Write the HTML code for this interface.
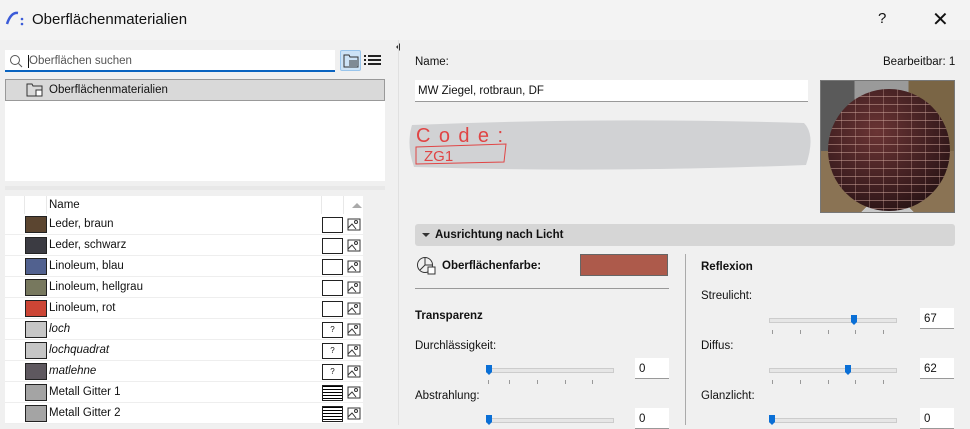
<!DOCTYPE html>
<html><head><meta charset="utf-8"><style>
*{margin:0;padding:0;box-sizing:border-box}
body{width:970px;height:425px;overflow:hidden;background:#f0f0f0;font-family:"Liberation Sans",sans-serif;font-size:11.5px;color:#111;position:relative}
.a{position:absolute}
.row{position:absolute;left:5px;width:358px;height:21px;background:#fff;border-bottom:1px solid #eee}
.sw{position:absolute;left:20px;top:2px;width:22px;height:17px;border:1px solid #222}
.nm{position:absolute;left:44px;top:4px}
.bx{position:absolute;left:317px;top:3px;width:21px;height:16px;border:1px solid #222;background:#fff;font-size:8px;text-align:center;line-height:14px}
.ic{position:absolute;left:342px;top:3px;width:14px;height:15px}
.tick{position:absolute;width:1px;height:4px;background:#999}
.track{position:absolute;height:5px;background:#e6e6e6;border:1px solid #ccc}
.thumb{position:absolute;width:6px;height:10px;background:#0a6fd6;clip-path:polygon(0 0,100% 0,100% 70%,50% 100%,0 70%)}
.num{position:absolute;width:34px;height:21px;background:#fff;border-bottom:1px solid #999;padding:5px 4px;font-size:11.5px}
b{font-weight:bold}
</style></head><body>
<div class="a" style="left:0;top:0;width:970px;height:40px;background:#f3f3f3"></div>
<svg class="a" style="left:5px;top:10px" width="20" height="16"><path d="M2 14 Q6 2 13 3" stroke="#3b5bd8" stroke-width="2.5" fill="none"/><circle cx="17" cy="9" r="1.3" fill="#3b5bd8"/><circle cx="17" cy="14" r="1.3" fill="#3b5bd8"/></svg>
<div class="a" style="left:32px;top:11px;font-size:15px">Oberflächenmaterialien</div>
<div class="a" style="left:878px;top:10px;font-size:15px">?</div>
<div class="a" style="left:932px;top:7px;font-size:20px;font-weight:300">✕</div>

<div class="a" style="left:5px;top:50px;width:330px;height:22px;background:#fff;border-bottom:2px solid #0a64c0"></div>
<svg class="a" style="left:9px;top:54px" width="14" height="14"><circle cx="6" cy="6" r="4.5" stroke="#555" fill="none"/><path d="M9.5 9.5 L13 13" stroke="#555"/></svg>
<div class="a" style="left:28px;top:55px;width:1px;height:13px;background:#111"></div>
<div class="a" style="left:29px;top:55px;color:#555">Oberflächen suchen</div>
<div class="a" style="left:340px;top:50px;width:21px;height:21px;background:#cde3f6;border:1px solid #99c5ec;border-radius:2px"></div>
<svg class="a" style="left:343px;top:53px" width="16" height="15"><path d="M1 2h5l1 2h8v10H1z" stroke="#333" fill="none"/><path d="M6 8h8M6 10h8M6 12h8" stroke="#333"/></svg>
<svg class="a" style="left:364px;top:54px" width="17" height="12"><path d="M0 2h2M4 2h13M0 6h2M4 6h13M0 10h2M4 10h13" stroke="#222" stroke-width="2"/></svg>
<div class="a" style="left:5px;top:79px;width:380px;height:102px;background:#fff"></div>
<div class="a" style="left:5px;top:79px;width:380px;height:22px;background:#d9d9d9;border:1px solid #999"></div>
<svg class="a" style="left:26px;top:82px" width="18" height="16"><path d="M1 2h5l1 2h9v10H1z" stroke="#333" fill="none"/><rect x="10" y="8" width="6" height="6" fill="#fff" stroke="#333"/></svg>
<div class="a" style="left:49px;top:84px">Oberflächenmaterialien</div>
<div class="a" style="left:5px;top:186px;width:380px;height:4px;background:#e8e8e8"></div>
<div class="a" style="left:5px;top:196px;width:358px;height:18px;background:#fff"></div>
<div class="a" style="left:24px;top:196px;width:1px;height:18px;background:#e8e8e8"></div>
<div class="a" style="left:46px;top:196px;width:1px;height:18px;background:#e8e8e8"></div>
<div class="a" style="left:321px;top:196px;width:1px;height:18px;background:#e8e8e8"></div>
<div class="a" style="left:343px;top:196px;width:1px;height:18px;background:#e8e8e8"></div>
<div class="a" style="left:49px;top:199px">Name</div>
<div class="a" style="left:352px;top:203px;border:5px solid transparent;border-bottom:5px solid #aaa;border-top:0"></div>
<div class="a" style="left:363px;top:196px;width:22px;height:229px;background:#f0f0f0"></div>

<div class="row" style="top:214px"><div class="sw" style="background:#5b4530"></div><div class="nm">Leder, braun</div><div class="bx"></div><svg class="ic"><rect x="1" y="2" width="12" height="11" fill="none" stroke="#333"/><circle cx="9" cy="5" r="1.5" fill="none" stroke="#333"/><path d="M1 11l4-4 4 5" stroke="#333" fill="none"/></svg></div>
<div class="row" style="top:235px"><div class="sw" style="background:#3b3b42"></div><div class="nm">Leder, schwarz</div><div class="bx"></div><svg class="ic"><rect x="1" y="2" width="12" height="11" fill="none" stroke="#333"/><circle cx="9" cy="5" r="1.5" fill="none" stroke="#333"/><path d="M1 11l4-4 4 5" stroke="#333" fill="none"/></svg></div>
<div class="row" style="top:256px"><div class="sw" style="background:#51618f"></div><div class="nm">Linoleum, blau</div><div class="bx"></div><svg class="ic"><rect x="1" y="2" width="12" height="11" fill="none" stroke="#333"/><circle cx="9" cy="5" r="1.5" fill="none" stroke="#333"/><path d="M1 11l4-4 4 5" stroke="#333" fill="none"/></svg></div>
<div class="row" style="top:277px"><div class="sw" style="background:#77785e"></div><div class="nm">Linoleum, hellgrau</div><div class="bx"></div><svg class="ic"><rect x="1" y="2" width="12" height="11" fill="none" stroke="#333"/><circle cx="9" cy="5" r="1.5" fill="none" stroke="#333"/><path d="M1 11l4-4 4 5" stroke="#333" fill="none"/></svg></div>
<div class="row" style="top:298px"><div class="sw" style="background:#cc4535"></div><div class="nm">Linoleum, rot</div><div class="bx"></div><svg class="ic"><rect x="1" y="2" width="12" height="11" fill="none" stroke="#333"/><circle cx="9" cy="5" r="1.5" fill="none" stroke="#333"/><path d="M1 11l4-4 4 5" stroke="#333" fill="none"/></svg></div>
<div class="row" style="top:319px"><div class="sw" style="background:#c6c6c6"></div><div class="nm" style="font-style:italic">loch</div><div class="bx">?</div><svg class="ic"><rect x="1" y="2" width="12" height="11" fill="none" stroke="#333"/><circle cx="9" cy="5" r="1.5" fill="none" stroke="#333"/><path d="M1 11l4-4 4 5" stroke="#333" fill="none"/></svg></div>
<div class="row" style="top:340px"><div class="sw" style="background:#c6c6c6"></div><div class="nm" style="font-style:italic">lochquadrat</div><div class="bx">?</div><svg class="ic"><rect x="1" y="2" width="12" height="11" fill="none" stroke="#333"/><circle cx="9" cy="5" r="1.5" fill="none" stroke="#333"/><path d="M1 11l4-4 4 5" stroke="#333" fill="none"/></svg></div>
<div class="row" style="top:361px"><div class="sw" style="background:#5e585f"></div><div class="nm" style="font-style:italic">matlehne</div><div class="bx">?</div><svg class="ic"><rect x="1" y="2" width="12" height="11" fill="none" stroke="#333"/><circle cx="9" cy="5" r="1.5" fill="none" stroke="#333"/><path d="M1 11l4-4 4 5" stroke="#333" fill="none"/></svg></div>
<div class="row" style="top:382px"><div class="sw" style="background:#a4a4a4"></div><div class="nm">Metall Gitter 1</div><div class="bx" style="background:repeating-linear-gradient(#000 0 1px,#fff 1px 3px)"></div><svg class="ic"><rect x="1" y="2" width="12" height="11" fill="none" stroke="#333"/><circle cx="9" cy="5" r="1.5" fill="none" stroke="#333"/><path d="M1 11l4-4 4 5" stroke="#333" fill="none"/></svg></div>
<div class="row" style="top:403px"><div class="sw" style="background:#a4a4a4"></div><div class="nm">Metall Gitter 2</div><div class="bx" style="background:repeating-linear-gradient(#000 0 1px,#fff 1px 3px)"></div><svg class="ic"><rect x="1" y="2" width="12" height="11" fill="none" stroke="#333"/><circle cx="9" cy="5" r="1.5" fill="none" stroke="#333"/><path d="M1 11l4-4 4 5" stroke="#333" fill="none"/></svg></div>

<div class="a" style="left:396px;top:43px;border:4px solid transparent;border-right:4px solid #333;border-left:0"></div>
<div class="a" style="left:398px;top:40px;width:1px;height:385px;background:#e0e0e0"></div>

<div class="a" style="left:415px;top:56px">Name:</div>
<div class="a" style="left:883px;top:56px">Bearbeitbar: 1</div>
<div class="a" style="left:415px;top:80px;width:393px;height:22px;background:#fff;border-bottom:1px solid #999;padding:5px 3px">MW Ziegel, rotbraun, DF</div>
<svg class="a" style="left:404px;top:115px" width="412" height="60"><path d="M8 10 Q200 2 400 8 Q412 20 402 50 Q200 58 10 52 Q2 30 8 10z" fill="#d1d2d4"/><text x="12" y="27" font-family="Liberation Sans" font-size="20" fill="#e04545" letter-spacing="1" textLength="88">Code:</text><path d="M12 32 L102 29 L100 47 L12 49z" stroke="#e04545" fill="none"/><text x="20" y="46" font-family="Liberation Sans" font-size="15" fill="#e04545">ZG1</text></svg>
<div class="a" style="left:820px;top:80px;width:135px;height:133px;border:1px solid #777;background:conic-gradient(from 45deg at 50% 80%,#8a7354 0 25%,#c8c8c8 0 50%,#8a7354 0 75%,#c8c8c8 0);overflow:hidden">
<div style="position:absolute;left:0;top:0;width:135px;height:70px;background:linear-gradient(90deg,#5a5a5a 0 25%,#9a9a9a 25% 65%,#7a6545 65%)"></div>
<div style="position:absolute;left:7px;top:8px;width:122px;height:122px;border-radius:50%;background:radial-gradient(circle at 40% 35%,#6a3434,#3a1c1e 60%,#140a0a)"></div>
<div style="position:absolute;left:7px;top:8px;width:122px;height:122px;border-radius:50%;background:repeating-linear-gradient(#0000 0 7px,rgba(210,170,160,.5) 7px 8px),repeating-linear-gradient(90deg,#0000 0 13px,rgba(210,170,160,.35) 13px 14px)"></div></div>

<div class="a" style="left:415px;top:224px;width:540px;height:22px;background:#d6d6d6;border-radius:3px"></div>
<div class="a" style="left:422px;top:233px;border:4px solid transparent;border-top:4px solid #333;border-bottom:0"></div>
<div class="a" style="left:435px;top:229px"><b>Ausrichtung nach Licht</b></div>
<svg class="a" style="left:416px;top:256px" width="22" height="20"><circle cx="9" cy="9" r="7.5" stroke="#333" fill="none"/><path d="M9 2v7l-5 5M9 9h7" stroke="#333" fill="none"/><rect x="12" y="11" width="7" height="7" fill="#fff" stroke="#333"/></svg>
<div class="a" style="left:442px;top:260px"><b>Oberflächenfarbe:</b></div>
<div class="a" style="left:580px;top:254px;width:88px;height:22px;background:#ad5a4b;border:1px solid #666"></div>
<div class="a" style="left:415px;top:288px;width:254px;height:1px;background:#999"></div>
<div class="a" style="left:685px;top:254px;width:1px;height:171px;background:#aaa"></div>
<div class="a" style="left:415px;top:310px"><b>Transparenz</b></div>
<div class="a" style="left:415px;top:340px">Durchlässigkeit:</div>
<div class="a" style="left:415px;top:390px">Abstrahlung:</div>
<div class="a" style="left:701px;top:261px"><b>Reflexion</b></div>
<div class="a" style="left:701px;top:290px">Streulicht:</div>
<div class="a" style="left:701px;top:340px">Diffus:</div>
<div class="a" style="left:701px;top:390px">Glanzlicht:</div>

<div class="track" style="left:486px;top:368px;width:128px"></div><div class="thumb" style="left:486px;top:365px"></div>
<div class="tick" style="left:488px;top:380px"></div><div class="tick" style="left:509px;top:380px"></div><div class="tick" style="left:537px;top:380px"></div><div class="tick" style="left:565px;top:380px"></div><div class="tick" style="left:592px;top:380px"></div>
<div class="num" style="left:635px;top:358px">0</div>
<div class="track" style="left:486px;top:418px;width:128px"></div><div class="thumb" style="left:486px;top:415px"></div>
<div class="num" style="left:635px;top:408px">0</div>

<div class="track" style="left:769px;top:318px;width:128px"></div><div class="thumb" style="left:851px;top:315px"></div>
<div class="tick" style="left:772px;top:330px"></div><div class="tick" style="left:800px;top:330px"></div><div class="tick" style="left:828px;top:330px"></div><div class="tick" style="left:855px;top:330px"></div><div class="tick" style="left:883px;top:330px"></div>
<div class="num" style="left:920px;top:308px">67</div>
<div class="track" style="left:769px;top:368px;width:128px"></div><div class="thumb" style="left:845px;top:365px"></div>
<div class="tick" style="left:772px;top:380px"></div><div class="tick" style="left:800px;top:380px"></div><div class="tick" style="left:828px;top:380px"></div><div class="tick" style="left:855px;top:380px"></div><div class="tick" style="left:883px;top:380px"></div>
<div class="num" style="left:920px;top:358px">62</div>
<div class="track" style="left:769px;top:418px;width:128px"></div><div class="thumb" style="left:769px;top:415px"></div>
<div class="num" style="left:920px;top:408px">0</div>
</body></html>
